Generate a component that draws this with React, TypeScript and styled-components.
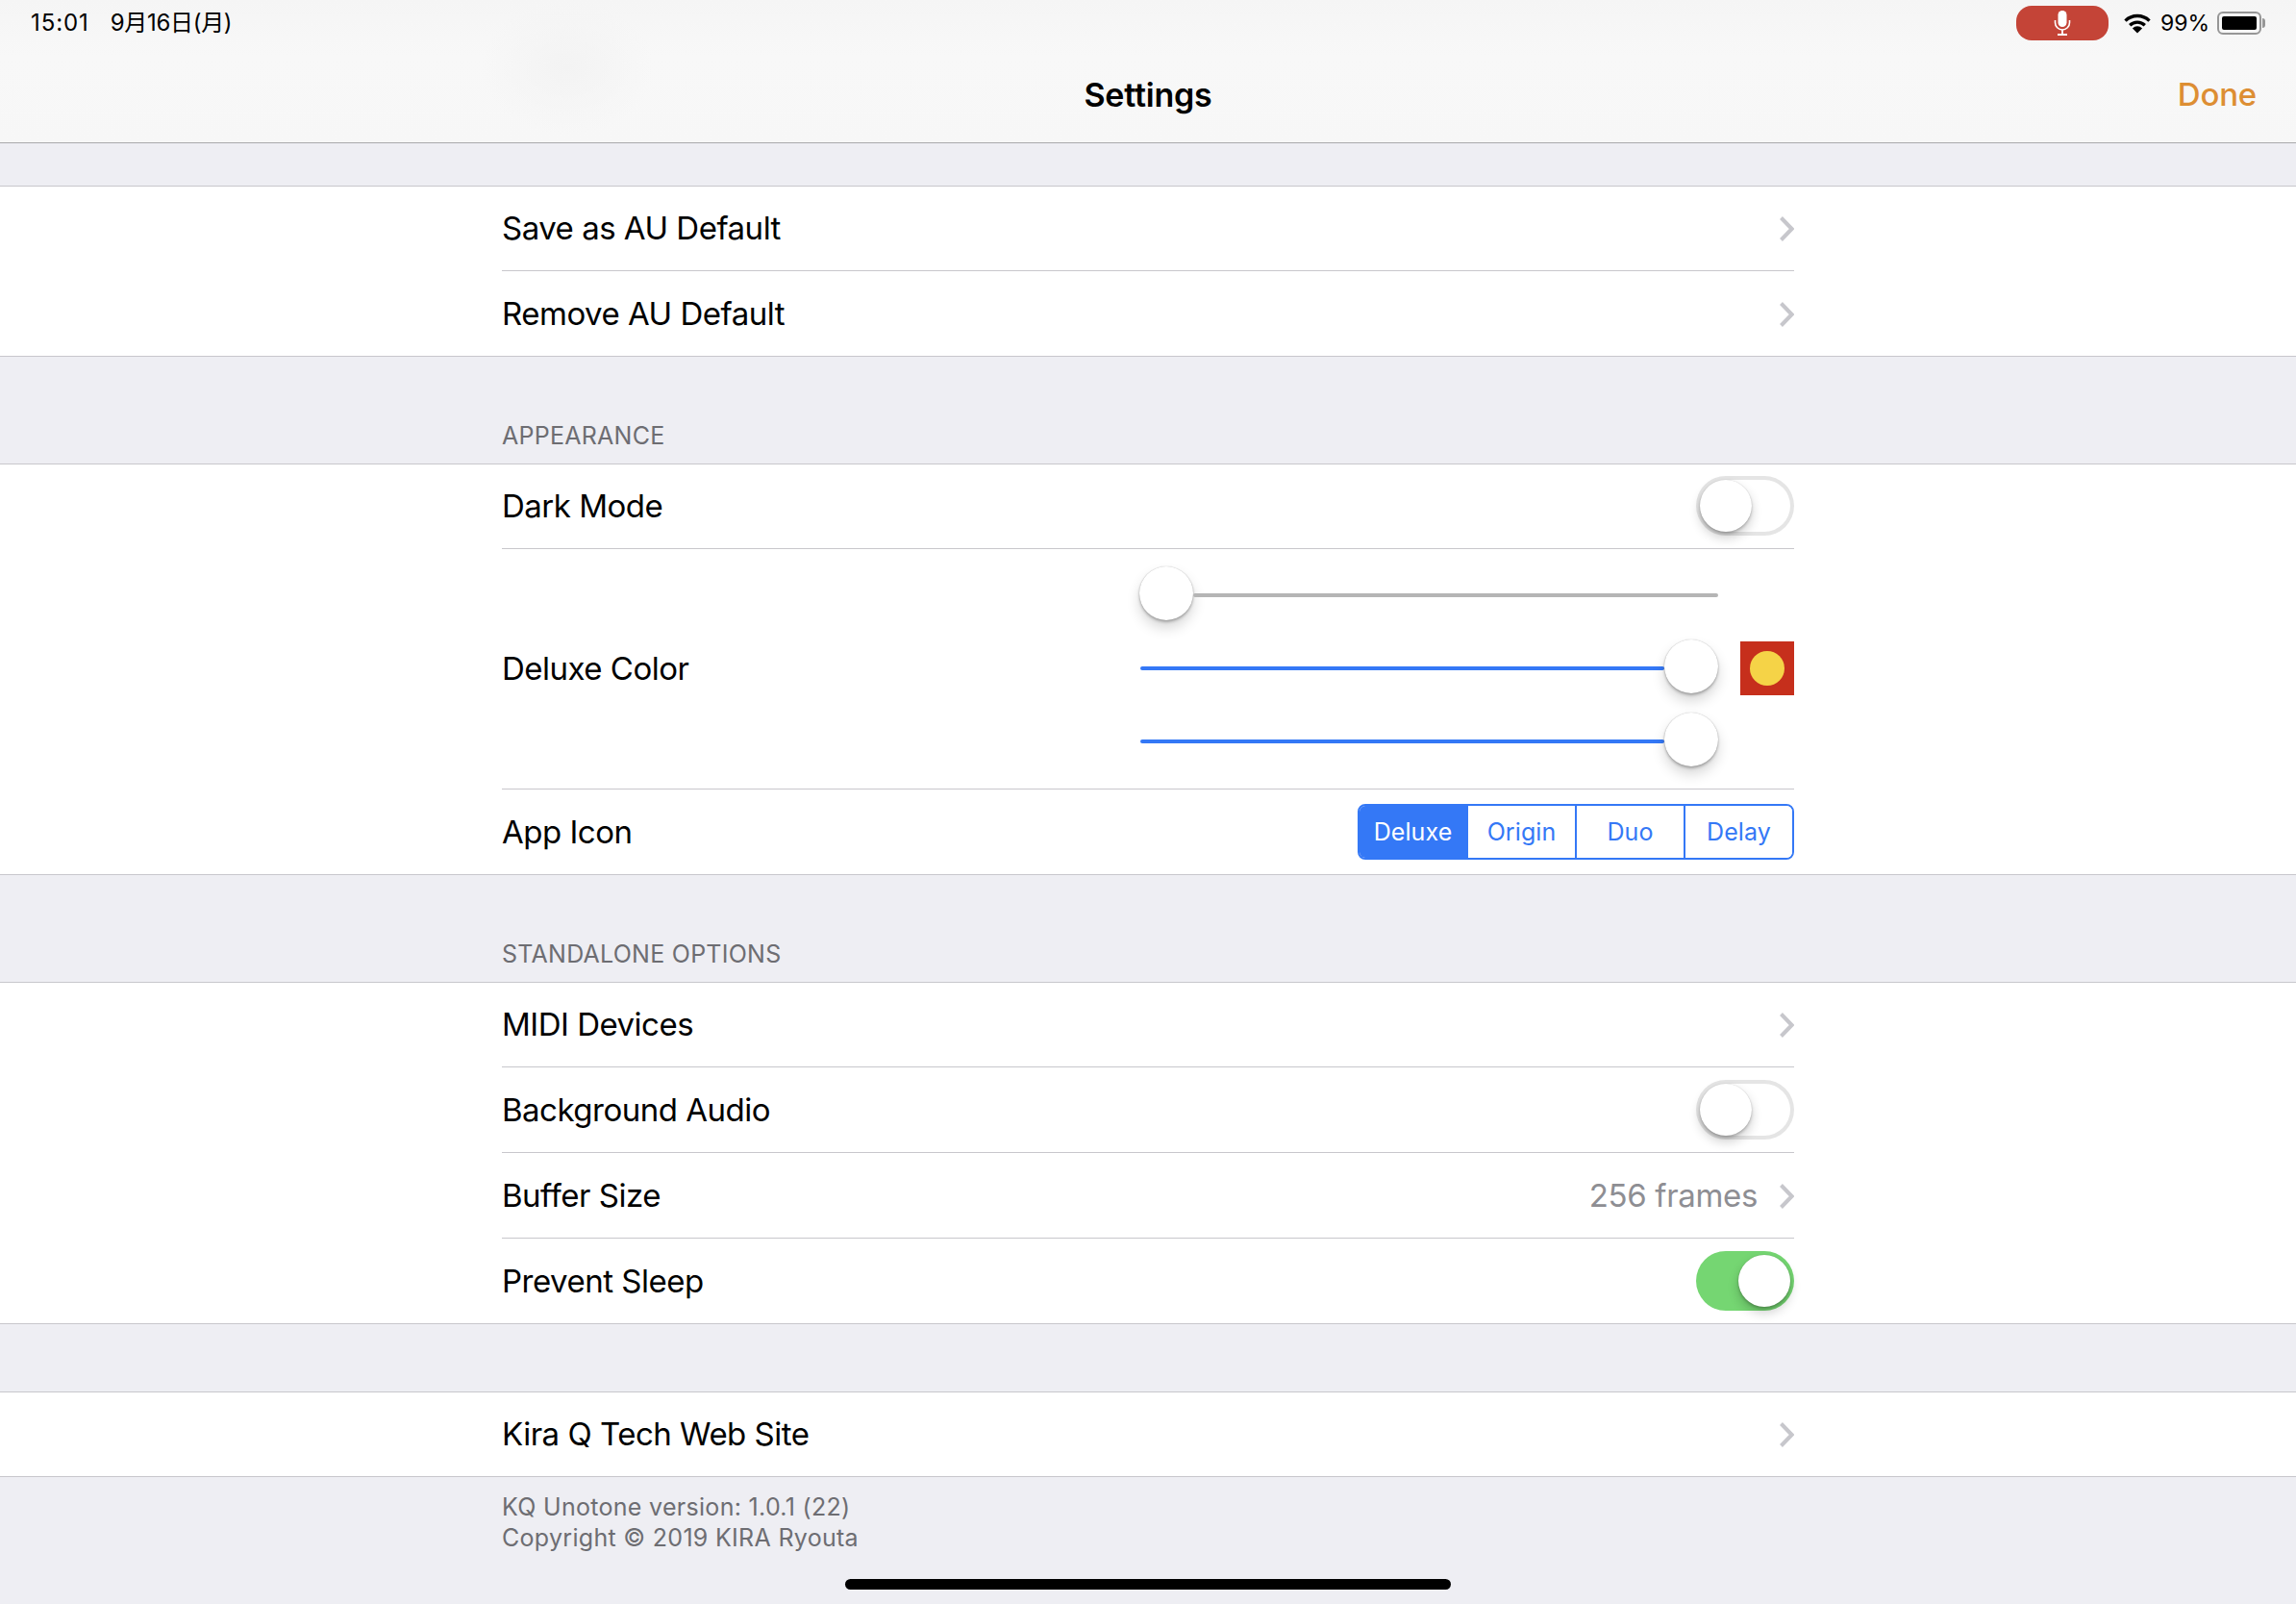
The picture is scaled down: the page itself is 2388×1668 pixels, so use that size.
import React from 'react';
import styled, { createGlobalStyle } from 'styled-components';

const BLUE = '#3478f6';
const HAIRLINE = '#c8c7cc';

const GlobalStyle = createGlobalStyle`
    html, body {
        margin: 0;
        padding: 0;
        background: #eeeef3;
    }
    * {
        box-sizing: border-box;
    }
`;

const Page = styled.div`
    position: relative;
    width: 2388px;
    height: 1668px;
    overflow: hidden;
    background: #eeeef3;
    font-family: Inter, 'Noto Sans CJK JP', sans-serif;
    color: #000;
`;

const NavBar = styled.header`
    height: 149px;
    border-bottom: 1px solid #a9a9ab;
    background:
        radial-gradient(ellipse 90px 70px at 590px 70px, #f3f3f3, rgba(243, 243, 243, 0)),
        linear-gradient(#f5f5f5, #f8f8f8 40%, #f7f7f7);
`;

const StatusBar = styled.div`
    display: flex;
    align-items: center;
    justify-content: space-between;
    height: 48px;
    padding: 0 36px 0 32px;
`;

const Clock = styled.div`
    display: flex;
    align-items: center;
    gap: 22px;
    font-size: 24px;
    line-height: 28px;
`;

const Time = styled.span`
    display: block;
    height: 28px;
    letter-spacing: 0.9px;
`;

const DateText = styled.span`
    display: block;
    height: 28px;
    letter-spacing: -0.3px;
`;

const StatusRight = styled.div`
    display: flex;
    align-items: center;
`;

const MicPill = styled.div`
    display: flex;
    align-items: center;
    justify-content: center;
    width: 96px;
    height: 36px;
    margin-right: 16px;
    border-radius: 16px;
    background: #c44437;
`;

const Percent = styled.span`
    margin: 0 8px 0 10px;
    font-size: 23px;
`;

const Battery = styled.div`
    position: relative;
    width: 46px;
    height: 24px;
    padding: 3px;
    border: 2px solid #969696;
    border-radius: 6px;

    &::before {
        content: '';
        display: block;
        height: 100%;
        border-radius: 2px;
        background: #000;
    }

    &::after {
        content: '';
        position: absolute;
        top: 5px;
        right: -6px;
        width: 3px;
        height: 10px;
        border-radius: 0 3px 3px 0;
        background: #969696;
    }
`;

const TitleBar = styled.div`
    display: grid;
    grid-template-columns: 1fr auto 1fr;
    align-items: center;
    height: 100px;
    padding: 0 41px;
`;

const Title = styled.h1`
    grid-column: 2;
    margin: 0;
    font-size: 34px;
    font-weight: 600;
    letter-spacing: -0.2px;
`;

const DoneButton = styled.div`
    justify-self: end;
    color: #dd8e33;
    font-size: 33px;
    font-weight: 500;
    letter-spacing: -0.2px;
`;

const Spacer = styled.div<{ $height: number }>`
    display: flex;
    align-items: flex-end;
    height: ${props => props.$height}px;
    padding: 0 522px 14px;
    color: #6d6d72;
    font-size: 25px;
    letter-spacing: 0.25px;
`;

const Group = styled.section`
    border-top: 1px solid ${HAIRLINE};
    border-bottom: 1px solid ${HAIRLINE};
    background: #fff;
`;

const RowInner = styled.div<{ $height?: number }>`
    display: flex;
    align-items: center;
    justify-content: space-between;
    height: ${props => props.$height || 89}px;
`;

const Row = styled.div`
    padding: 0 522px;

    &:first-child {
        margin-top: -1px;
    }

    &:not(:last-child) > ${RowInner} {
        border-bottom: 1px solid ${HAIRLINE};
    }

    &:last-child > ${RowInner} {
        height: 88px;
    }
`;

const Label = styled.div`
    font-size: 33px;
    letter-spacing: -0.5px;
`;

const ColorLabel = styled(Label)`
    margin-bottom: 2px;
`;

const Trailing = styled.div`
    display: flex;
    align-items: center;
    gap: 23px;
`;

const Detail = styled.span`
    color: #8e8e93;
    font-size: 33px;
    letter-spacing: -0.35px;
`;

const ChevronIcon = styled.svg`
    display: block;
    margin-top: 2px;
`;

const Chevron = () => (
    <ChevronIcon width="15" height="26" viewBox="0 0 15 26" fill="none">
        <path d="M1.5 1.5 L12.6 13 L1.5 24.5" stroke="#c7c7cc" strokeWidth="4" />
    </ChevronIcon>
);

const SwitchTrack = styled.div<{ $on?: boolean }>`
    display: flex;
    justify-content: ${props => (props.$on ? 'flex-end' : 'flex-start')};
    width: 102px;
    height: 62px;
    padding: 4px;
    border-radius: 31px;
    background: ${props => (props.$on ? '#75d672' : '#fff')};
    box-shadow: ${props => (props.$on ? 'none' : 'inset 0 0 0 4px #e5e5e5')};
`;

const SwitchKnob = styled.div`
    width: 54px;
    height: 54px;
    border-radius: 50%;
    background: #fff;
    box-shadow: 0 6px 12px rgba(0, 0, 0, 0.2), 0 2px 3px rgba(0, 0, 0, 0.2), 0 0 1px rgba(0, 0, 0, 0.2);
`;

const ColorControls = styled.div`
    display: grid;
    grid-template-columns: 602px 56px;
    column-gap: 23px;
    row-gap: 20px;
    align-items: center;
    margin-bottom: 5px;
`;

const Slider = styled.div`
    grid-column: 1;
    display: flex;
    align-items: center;
`;

const Track = styled.div<{ $active?: boolean }>`
    flex: 1;
    height: 4px;
    margin-top: 4px;
    margin-left: ${props => (props.$active ? '1px' : '0')};
    border-radius: 2px;
    background: ${props => (props.$active ? BLUE : '#b5b5b5')};
`;

const SliderKnob = styled.div`
    flex: none;
    width: 56px;
    height: 56px;
    border-radius: 50%;
    background: #fff;
    box-shadow: 0 8px 14px rgba(0, 0, 0, 0.16), 0 2px 3px rgba(0, 0, 0, 0.26), 0 0 1px rgba(0, 0, 0, 0.3);
`;

const Swatch = styled.div`
    grid-column: 2;
    grid-row: 2;
    display: flex;
    align-items: center;
    justify-content: center;
    height: 56px;
    margin: 2px 0 -2px;
    background: #c62f1c;

    &::before {
        content: '';
        width: 36px;
        height: 36px;
        border-radius: 50%;
        background: #f5d347;
    }
`;

const Segmented = styled.div`
    display: flex;
    width: 454px;
    height: 58px;
    overflow: hidden;
    border: 2px solid ${BLUE};
    border-radius: 8px;
`;

const Segment = styled.div<{ $selected?: boolean }>`
    display: flex;
    flex: 1;
    align-items: center;
    justify-content: center;
    background: ${props => (props.$selected ? BLUE : '#fff')};
    color: ${props => (props.$selected ? '#fff' : BLUE)};
    font-size: 25px;
    letter-spacing: 0.1px;

    & + & {
        border-left: 2px solid ${BLUE};
    }
`;

const Footer = styled.footer`
    padding: 15px 522px 0;
    color: #6d6d72;
    font-size: 25px;
    letter-spacing: 0.3px;
    line-height: 32px;
`;

const HomeBar = styled.div`
    position: absolute;
    left: 879px;
    top: 1642px;
    width: 630px;
    height: 11px;
    border-radius: 6px;
    background: #000;
`;

const MicIcon = () => (
    <svg width="20" height="28" viewBox="0 0 20 28" fill="none">
        <rect x="5.5" y="1" width="9" height="17" rx="4.5" fill="#fff" />
        <path d="M2.5 11 V13.5 A7.5 7.5 0 0 0 17.5 13.5 V11" stroke="#fff" strokeWidth="1.6" />
        <path d="M10 21 V26 M5 26 H15" stroke="#fff" strokeWidth="1.8" />
    </svg>
);

const WifiIcon = () => (
    <svg width="28" height="21" viewBox="0 0 28 21" fill="none">
        <path d="M1.5 7.6 A18 18 0 0 1 26.5 7.6" stroke="#000" strokeWidth="3.4" />
        <path d="M6.2 12.2 A11.4 11.4 0 0 1 21.8 12.2" stroke="#000" strokeWidth="3.4" />
        <path d="M8.9 15.4 A7.4 7.4 0 0 1 19.1 15.4 L14 20.6 Z" fill="#000" />
    </svg>
);

const SettingRow = ({ label, children }: { label: string; children?: React.ReactNode }) => (
    <Row>
        <RowInner>
            <Label>{label}</Label>
            {children}
        </RowInner>
    </Row>
);

const App = () => (
    <Page>
        <GlobalStyle />
        <NavBar>
            <StatusBar>
                <Clock>
                    <Time>15:01</Time>
                    <DateText>9月16日(月)</DateText>
                </Clock>
                <StatusRight>
                    <MicPill>
                        <MicIcon />
                    </MicPill>
                    <WifiIcon />
                    <Percent>99%</Percent>
                    <Battery />
                </StatusRight>
            </StatusBar>
            <TitleBar>
                <Title>Settings</Title>
                <DoneButton>Done</DoneButton>
            </TitleBar>
        </NavBar>

        <Spacer $height={44} />
        <Group>
            <SettingRow label="Save as AU Default">
                <Chevron />
            </SettingRow>
            <SettingRow label="Remove AU Default">
                <Chevron />
            </SettingRow>
        </Group>

        <Spacer $height={111}>APPEARANCE</Spacer>
        <Group>
            <SettingRow label="Dark Mode">
                <SwitchTrack>
                    <SwitchKnob />
                </SwitchTrack>
            </SettingRow>
            <Row>
                <RowInner $height={250}>
                    <ColorLabel>Deluxe Color</ColorLabel>
                    <ColorControls>
                        <Slider>
                            <SliderKnob />
                            <Track />
                        </Slider>
                        <Slider>
                            <Track $active />
                            <SliderKnob />
                        </Slider>
                        <Swatch />
                        <Slider>
                            <Track $active />
                            <SliderKnob />
                        </Slider>
                    </ColorControls>
                </RowInner>
            </Row>
            <SettingRow label="App Icon">
                <Segmented>
                    <Segment $selected>Deluxe</Segment>
                    <Segment>Origin</Segment>
                    <Segment>Duo</Segment>
                    <Segment>Delay</Segment>
                </Segmented>
            </SettingRow>
        </Group>

        <Spacer $height={111}>STANDALONE OPTIONS</Spacer>
        <Group>
            <SettingRow label="MIDI Devices">
                <Chevron />
            </SettingRow>
            <SettingRow label="Background Audio">
                <SwitchTrack>
                    <SwitchKnob />
                </SwitchTrack>
            </SettingRow>
            <SettingRow label="Buffer Size">
                <Trailing>
                    <Detail>256 frames</Detail>
                    <Chevron />
                </Trailing>
            </SettingRow>
            <SettingRow label="Prevent Sleep">
                <SwitchTrack $on>
                    <SwitchKnob />
                </SwitchTrack>
            </SettingRow>
        </Group>

        <Spacer $height={70} />
        <Group>
            <SettingRow label="Kira Q Tech Web Site">
                <Chevron />
            </SettingRow>
        </Group>
        <Footer>
            KQ Unotone version: 1.0.1 (22)
            <br />
            Copyright © 2019 KIRA Ryouta
        </Footer>
        <HomeBar />
    </Page>
);

export default App;
